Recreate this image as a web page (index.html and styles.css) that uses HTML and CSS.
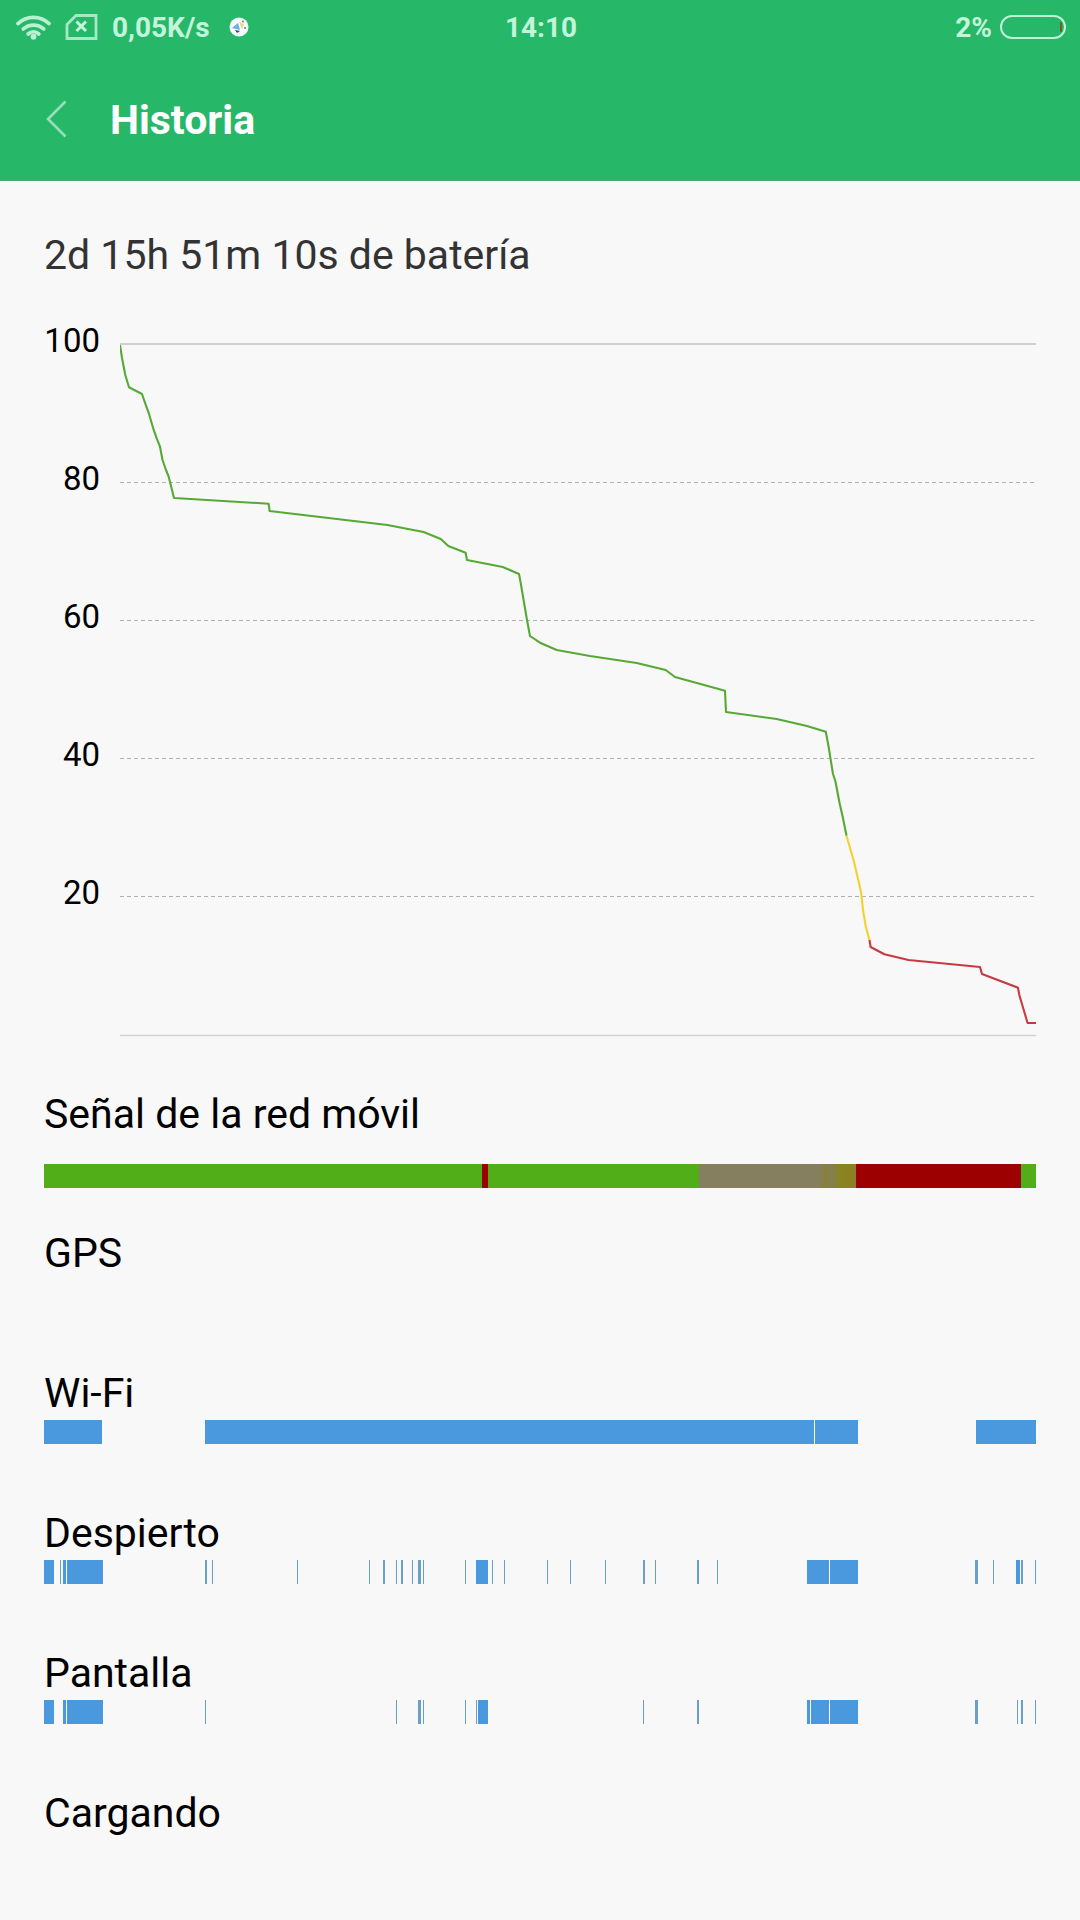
FILE: index.html
```html
<!DOCTYPE html>
<html lang="es">
<head>
<meta charset="utf-8">
<title>Historia</title>
<link rel="stylesheet" href="styles.css">
</head>
<body>
<header class="appbar">
  <div class="status">
    <div class="status-left">
      <svg class="ic-wifi" viewBox="0 0 36 26" aria-hidden="true">
        <path d="M2 9.500C11 1 25 1 34 9.500" />
        <path d="M7.500 15C13.500 9.800 22.500 9.800 28.500 15" />
        <path d="M12.500 20.200C15.800 17.300 20.200 17.300 23.500 20.200" />
        <circle cx="18" cy="23" r="3" />
      </svg>
      <svg class="ic-sim" viewBox="0 0 32 26" aria-hidden="true">
        <path d="M1.500 10.500 10.500 1.500H30.500V24.500H1.500Z" />
        <path class="sim-x" d="M11 7.500 20.500 17M20.500 7.500 11 17" />
      </svg>
      <span class="speed">0,05K/s</span>
      <svg class="ic-app" viewBox="0 0 20 20" aria-hidden="true">
        <circle cx="10" cy="10" r="9.500" fill="#f4fbf8" />
        <path d="M3 11 9 6l2 7z" fill="#6fafe2" />
        <path d="M10 5l5 2-2 5z" fill="#e8dc7a" />
        <path d="M6 13l5 1-3 2z" fill="#2d4f66" />
        <circle cx="14" cy="4.500" r=".9" fill="#666" />
        <circle cx="16" cy="11" r=".9" fill="#666" />
      </svg>
    </div>
    <span class="clock">14:10</span>
    <div class="status-right">
      <span class="pct">2%</span>
      <span class="battery"><span class="battery-level"></span></span>
    </div>
  </div>
  <div class="toolbar">
    <svg class="ic-back" viewBox="0 0 21 38" aria-hidden="true"><path d="M19.500 1.500 2 19 19.500 36.500" /></svg>
    <h1 class="title">Historia</h1>
  </div>
</header>

<main class="content">
  <h2 class="duration">2d 15h 51m 10s de batería</h2>

  <section class="chart">
    <div class="axis">
      <span class="tick">100</span>
      <span class="tick">80</span>
      <span class="tick">60</span>
      <span class="tick">40</span>
      <span class="tick">20</span>
    </div>
    <svg class="plot" viewBox="120 340 916 700" aria-hidden="true">
      <line class="grid-solid" x1="120" y1="344" x2="1036" y2="344" />
      <line class="grid-dash" x1="120" y1="482.500" x2="1036" y2="482.500" />
      <line class="grid-dash" x1="120" y1="620.500" x2="1036" y2="620.500" />
      <line class="grid-dash" x1="120" y1="758.500" x2="1036" y2="758.500" />
      <line class="grid-dash" x1="120" y1="896.500" x2="1036" y2="896.500" />
      <line class="grid-base" x1="120" y1="1035.500" x2="1036" y2="1035.500" />
      <polyline class="curve curve-green" points="120,345 122,358 125.300,375 129,387.300 142,394 144.600,401.700 148.800,413.300 153.200,428.300 156.700,438.300 160,446.700 162.500,460 166,470 168.700,476.700 174,498 268.600,503.700 269.600,511 387.400,525 423.600,532 440.800,539 448.300,546 465.600,552.700 467,560 502.800,567 519,574 520.700,583 527,620 530,636 540,642.700 556.700,650 590,656 636.700,663 665.700,670 675,677 725,690.700 726,712 776.700,719 806.900,726 825.800,731.700 828.600,746.700 831,761.700 833,774 835.500,781.700 839.600,803.300 843,818.300 846.500,835.700" />
      <polyline class="curve curve-yellow" points="846.500,835.700 854,861.700 861,891.700 863,910 865.800,926.700 869.500,940" />
      <polyline class="curve curve-red" points="869.500,940 870.600,947 884.400,954.300 908.500,960 980,967 982,974 1018,987.700 1019.300,995 1027.600,1023 1036,1023" />
    </svg>
  </section>

  <section class="row row-signal">
    <h3 class="label">Señal de la red móvil</h3>
    <svg class="track" viewBox="44 0 992 24" preserveAspectRatio="none" aria-hidden="true">
      <defs>
        <linearGradient id="fade" x1="0" x2="1" y1="0" y2="0">
          <stop offset="0" stop-color="#857f60" />
          <stop offset=".2" stop-color="#857f58" />
          <stop offset=".3" stop-color="#888038" />
          <stop offset=".41" stop-color="#847f50" />
          <stop offset=".55" stop-color="#85803f" />
          <stop offset=".6" stop-color="#8a8422" />
          <stop offset=".86" stop-color="#8a8222" />
          <stop offset="1" stop-color="#8f7f28" />
        </linearGradient>
      </defs>
      <rect class="sig-good" x="44" y="0" width="438" height="24" />
      <rect class="sig-bad" x="482" y="0" width="6" height="24" />
      <rect class="sig-good" x="488" y="0" width="211" height="24" />
      <rect class="sig-mid" x="699" y="0" width="113" height="24" />
      <rect fill="url(#fade)" x="812" y="0" width="44" height="24" />
      <rect class="sig-bad" x="856" y="0" width="165" height="24" />
      <rect class="sig-good" x="1021" y="0" width="15" height="24" />
    </svg>
  </section>

  <section class="row">
    <h3 class="label">GPS</h3>
  </section>

  <section class="row">
    <h3 class="label">Wi-Fi</h3>
    <svg class="track" viewBox="44 0 992 24" preserveAspectRatio="none" aria-hidden="true">
      <rect class="on" x="44" y="0" width="58" height="24" />
      <rect class="on" x="205" y="0" width="609" height="24" />
      <rect class="on" x="815" y="0" width="43" height="24" />
      <rect class="on" x="976" y="0" width="60" height="24" />
    </svg>
  </section>

  <section class="row">
    <h3 class="label">Despierto</h3>
    <svg class="track" viewBox="44 0 992 24" preserveAspectRatio="none" aria-hidden="true">
      <rect class="on" x="44" y="0" width="10" height="24" />
      <rect class="thin" x="60" y="0" width="1" height="24" />
      <rect class="on" x="63" y="0" width="3" height="24" />
      <rect class="on" x="67" y="0" width="36" height="24" />
      <rect class="thin" x="205" y="0" width="2" height="24" />
      <rect class="thin" x="212" y="0" width="1" height="24" />
      <rect class="thin" x="297" y="0" width="1" height="24" />
      <rect class="thin" x="369" y="0" width="1" height="24" />
      <rect class="thin" x="383" y="0" width="2" height="24" />
      <rect class="thin" x="396" y="0" width="1" height="24" />
      <rect class="thin" x="401" y="0" width="2" height="24" />
      <rect class="thin" x="412" y="0" width="1" height="24" />
      <rect class="thin" x="418" y="0" width="3" height="24" />
      <rect class="thin" x="423" y="0" width="1" height="24" />
      <rect class="thin" x="465" y="0" width="1" height="24" />
      <rect class="on" x="476" y="0" width="12" height="24" />
      <rect class="thin" x="492" y="0" width="1" height="24" />
      <rect class="thin" x="504" y="0" width="1" height="24" />
      <rect class="thin" x="547" y="0" width="1" height="24" />
      <rect class="thin" x="570" y="0" width="1" height="24" />
      <rect class="thin" x="605" y="0" width="1" height="24" />
      <rect class="thin" x="643" y="0" width="2" height="24" />
      <rect class="thin" x="655" y="0" width="1" height="24" />
      <rect class="thin" x="697" y="0" width="2" height="24" />
      <rect class="thin" x="717" y="0" width="1" height="24" />
      <rect class="on" x="807" y="0" width="22" height="24" />
      <rect class="on" x="830" y="0" width="28" height="24" />
      <rect class="thin" x="975" y="0" width="3" height="24" />
      <rect class="thin" x="993" y="0" width="1" height="24" />
      <rect class="on" x="1016" y="0" width="4" height="24" />
      <rect class="thin" x="1021" y="0" width="2" height="24" />
      <rect class="thin" x="1035" y="0" width="1" height="24" />
    </svg>
  </section>

  <section class="row">
    <h3 class="label">Pantalla</h3>
    <svg class="track" viewBox="44 0 992 24" preserveAspectRatio="none" aria-hidden="true">
      <rect class="on" x="44" y="0" width="10" height="24" />
      <rect class="on" x="63" y="0" width="3" height="24" />
      <rect class="on" x="67" y="0" width="36" height="24" />
      <rect class="thin" x="205" y="0" width="1" height="24" />
      <rect class="thin" x="396" y="0" width="1" height="24" />
      <rect class="thin" x="418" y="0" width="3" height="24" />
      <rect class="thin" x="423" y="0" width="1" height="24" />
      <rect class="thin" x="465" y="0" width="1" height="24" />
      <rect class="thin" x="476" y="0" width="1" height="24" />
      <rect class="on" x="478" y="0" width="10" height="24" />
      <rect class="thin" x="643" y="0" width="1" height="24" />
      <rect class="thin" x="697" y="0" width="2" height="24" />
      <rect class="on" x="807" y="0" width="3" height="24" />
      <rect class="on" x="811" y="0" width="18" height="24" />
      <rect class="on" x="830" y="0" width="28" height="24" />
      <rect class="thin" x="975" y="0" width="3" height="24" />
      <rect class="thin" x="1017" y="0" width="1" height="24" />
      <rect class="thin" x="1021" y="0" width="2" height="24" />
      <rect class="thin" x="1035" y="0" width="1" height="24" />
    </svg>
  </section>

  <section class="row">
    <h3 class="label">Cargando</h3>
  </section>
</main>
</body>
</html>
```

FILE: styles.css
```css
* { box-sizing: border-box; }

html, body {
  margin: 0;
  padding: 0;
}

body {
  width: 1080px;
  height: 1920px;
  overflow: hidden;
  background: #f8f8f8;
  color: #000;
  font-family: Roboto, "Noto Sans", sans-serif;
}

.appbar {
  height: 181px;
  background: #27b768;
  border-bottom: 1px solid #4aa878;
}

.status {
  height: 54px;
  padding: 0 14px 0 16px;
  display: grid;
  grid-template-columns: 1fr auto 1fr;
  align-items: center;
  color: #c2f5da;
  font-size: 28px;
  font-weight: 700;
}

.status-left {
  display: flex;
  align-items: center;
}

.ic-wifi {
  width: 35px;
  height: 26px;
  fill: none;
  stroke: #b9f0d2;
  stroke-width: 3.800;
  stroke-linecap: round;
}

.ic-wifi circle {
  fill: #b9f0d2;
  stroke: none;
}

.ic-sim {
  width: 33px;
  height: 26px;
  margin-left: 14px;
  fill: none;
  stroke: #a5e9c4;
  stroke-width: 2.800;
}

.sim-x {
  stroke-width: 3;
  stroke: #c2f5da;
}

.speed {
  margin-left: 14px;
}

.ic-app {
  width: 20px;
  height: 20px;
  margin-left: 19px;
}

.clock {
  text-align: center;
}

.status-right {
  display: flex;
  align-items: center;
  justify-content: flex-end;
}

.pct {
  margin-right: 8px;
}

.battery {
  width: 66px;
  height: 24px;
  padding: 5px 2px 5px 0;
  border: 2px solid #bff3d7;
  border-radius: 12px;
  display: flex;
  justify-content: flex-end;
}

.battery-level {
  width: 2px;
  background: #7a5a1e;
  border-radius: 1px;
}

.toolbar {
  height: 126px;
  padding: 6px 0 0 46px;
  display: flex;
  align-items: center;
}

.ic-back {
  width: 21px;
  height: 38px;
  margin-top: -2px;
  fill: none;
  stroke: #97dfba;
  stroke-width: 2.600;
}

.title {
  margin: 0 0 0 43px;
  color: #fff;
  font-size: 41px;
  font-weight: 700;
  line-height: 48px;
}

.content {
  padding: 0 44px;
}

.duration {
  margin: 0;
  padding-top: 50px;
  color: #333;
  font-size: 41px;
  font-weight: 400;
  line-height: 48px;
}

.chart {
  display: flex;
  margin-top: 61px;
}

.axis {
  width: 56px;
  flex: none;
  margin-top: -19px;
  display: flex;
  flex-direction: column;
}

.tick {
  height: 138px;
  font-size: 33px;
  line-height: 40px;
  text-align: right;
}

.plot {
  width: 916px;
  height: 700px;
  margin-left: 20px;
  flex: none;
  display: block;
}

.grid-solid {
  stroke: #cfcfcf;
  stroke-width: 2;
}

.grid-dash {
  stroke: #b0b0b0;
  stroke-width: 1;
  stroke-dasharray: 4 3;
}

.grid-base {
  stroke: #d2d2d2;
  stroke-width: 1.500;
}

.curve {
  fill: none;
  stroke-width: 2.100;
  stroke-linejoin: round;
}

.curve-green { stroke: #57a935; }
.curve-yellow { stroke: #f3d22f; }
.curve-red { stroke: #c83a42; }

.row {
  height: 140px;
}

.row-signal {
  height: 139px;
  margin-top: 50px;
}

.row-signal .track {
  margin-top: 26px;
}

.label {
  margin: 0;
  font-size: 41px;
  font-weight: 400;
  line-height: 48px;
}

.track {
  display: block;
  width: 992px;
  height: 24px;
  margin-top: 3px;
  shape-rendering: crispEdges;
}

.on { fill: #4a98de; }
.thin { fill: #6a9fc8; }
.sig-good { fill: #52ae18; }
.sig-bad { fill: #9c0000; }
.sig-mid { fill: #857f60; }
```
